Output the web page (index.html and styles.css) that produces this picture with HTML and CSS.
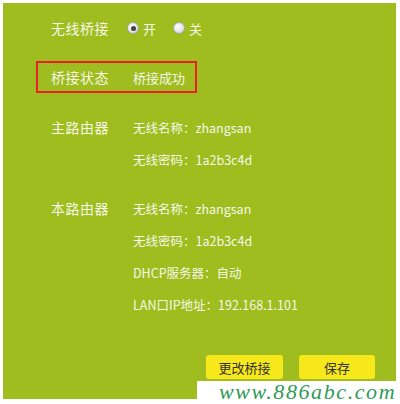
FILE: index.html
```html
<!DOCTYPE html>
<html lang="zh-CN">
<head>
<meta charset="utf-8">
<title>无线桥接</title>
<link rel="stylesheet" href="styles.css">
</head>
<body>
<div class="panel">
  <div class="row first">
    <div class="label">无线桥接</div>
    <div class="value radios">
      <span class="radio checked"></span><span class="opt">开</span>
      <span class="radio"></span><span class="opt">关</span>
    </div>
  </div>
  <div class="status">
    <div class="label">桥接状态</div>
    <div class="value small">桥接成功</div>
  </div>
  <div class="section main">
    <div class="row">
      <div class="label">主路由器</div>
      <div class="value">无线名称：zhangsan</div>
    </div>
    <div class="row">
      <div class="label"></div>
      <div class="value">无线密码：1a2b3c4d</div>
    </div>
  </div>
  <div class="section local">
    <div class="row">
      <div class="label">本路由器</div>
      <div class="value">无线名称：zhangsan</div>
    </div>
    <div class="row">
      <div class="label"></div>
      <div class="value">无线密码：1a2b3c4d</div>
    </div>
    <div class="row">
      <div class="label"></div>
      <div class="value">DHCP服务器：自动</div>
    </div>
    <div class="row">
      <div class="label"></div>
      <div class="value">LAN口IP地址：192.168.1.101</div>
    </div>
  </div>
  <div class="buttons">
    <button class="btn wide">更改桥接</button>
    <button class="btn">保存</button>
  </div>
</div>
<div class="watermark">www.886abc.com</div>
</body>
</html>
```
FILE: styles.css
```css
html, body {
  margin: 0;
  padding: 0;
  background: #ffffff;
}
body {
  width: 400px;
  height: 404px;
  padding: 3px 4px 5px 3px;
  box-sizing: border-box;
  position: relative;
  font-family: "Noto Sans CJK SC", "Noto Sans", sans-serif;
}
.panel {
  background: #9fbd1f;
  height: 396px;
  box-sizing: border-box;
  padding: 9px 21px 0 48px;
  display: flex;
  flex-direction: column;
  color: #f6f7e6;
}
.row {
  display: flex;
  align-items: center;
  height: 32px;
}
.label {
  width: 82px;
  flex: none;
  font-size: 14px;
  letter-spacing: 0.5px;
}
.value {
  font-size: 12.5px;
}
.value.small {
  font-size: 13px;
}
.radios {
  display: flex;
  align-items: center;
}
.radio {
  width: 10px;
  height: 10px;
  border-radius: 50%;
  border: 1px solid #a9a9a9;
  background: radial-gradient(circle at 40% 35%, #ffffff 0%, #e8e8e8 50%, #c9c9c9 100%);
  display: inline-flex;
  align-items: center;
  justify-content: center;
  margin-left: -6px;
}
.radio.checked::after {
  content: "";
  width: 5px;
  height: 5px;
  border-radius: 50%;
  background: #444;
}
.opt {
  font-size: 13px;
  margin-left: 4px;
  margin-right: 23px;
}
.status {
  margin-top: 17px;
  margin-left: -15px;
  width: 161px;
  height: 32px;
  box-sizing: border-box;
  border: 2px solid #e8202a;
  padding-left: 13px;
  display: flex;
  align-items: center;
}
.section.main {
  margin-top: 18px;
}
.section.local {
  margin-top: 17px;
}
.buttons {
  margin-top: 35px;
  display: flex;
  justify-content: flex-end;
  gap: 16px;
}
.btn {
  width: 76px;
  height: 24px;
  border: none;
  border-radius: 3px;
  background: #f7e81b;
  color: #333333;
  font-family: "Noto Sans CJK SC", sans-serif;
  font-size: 13px;
  padding: 0;
}
.btn.wide {
  width: 77px;
}
.watermark {
  position: absolute;
  left: 197px;
  top: 381px;
  width: 203px;
  height: 23px;
  background: #ffffff;
  color: #2f9a57;
  font-family: "Liberation Serif", serif;
  font-style: italic;
  font-size: 22px;
  line-height: 22px;
  padding-left: 22px;
  box-sizing: border-box;
  letter-spacing: 1.6px;
  white-space: nowrap;
}
```
